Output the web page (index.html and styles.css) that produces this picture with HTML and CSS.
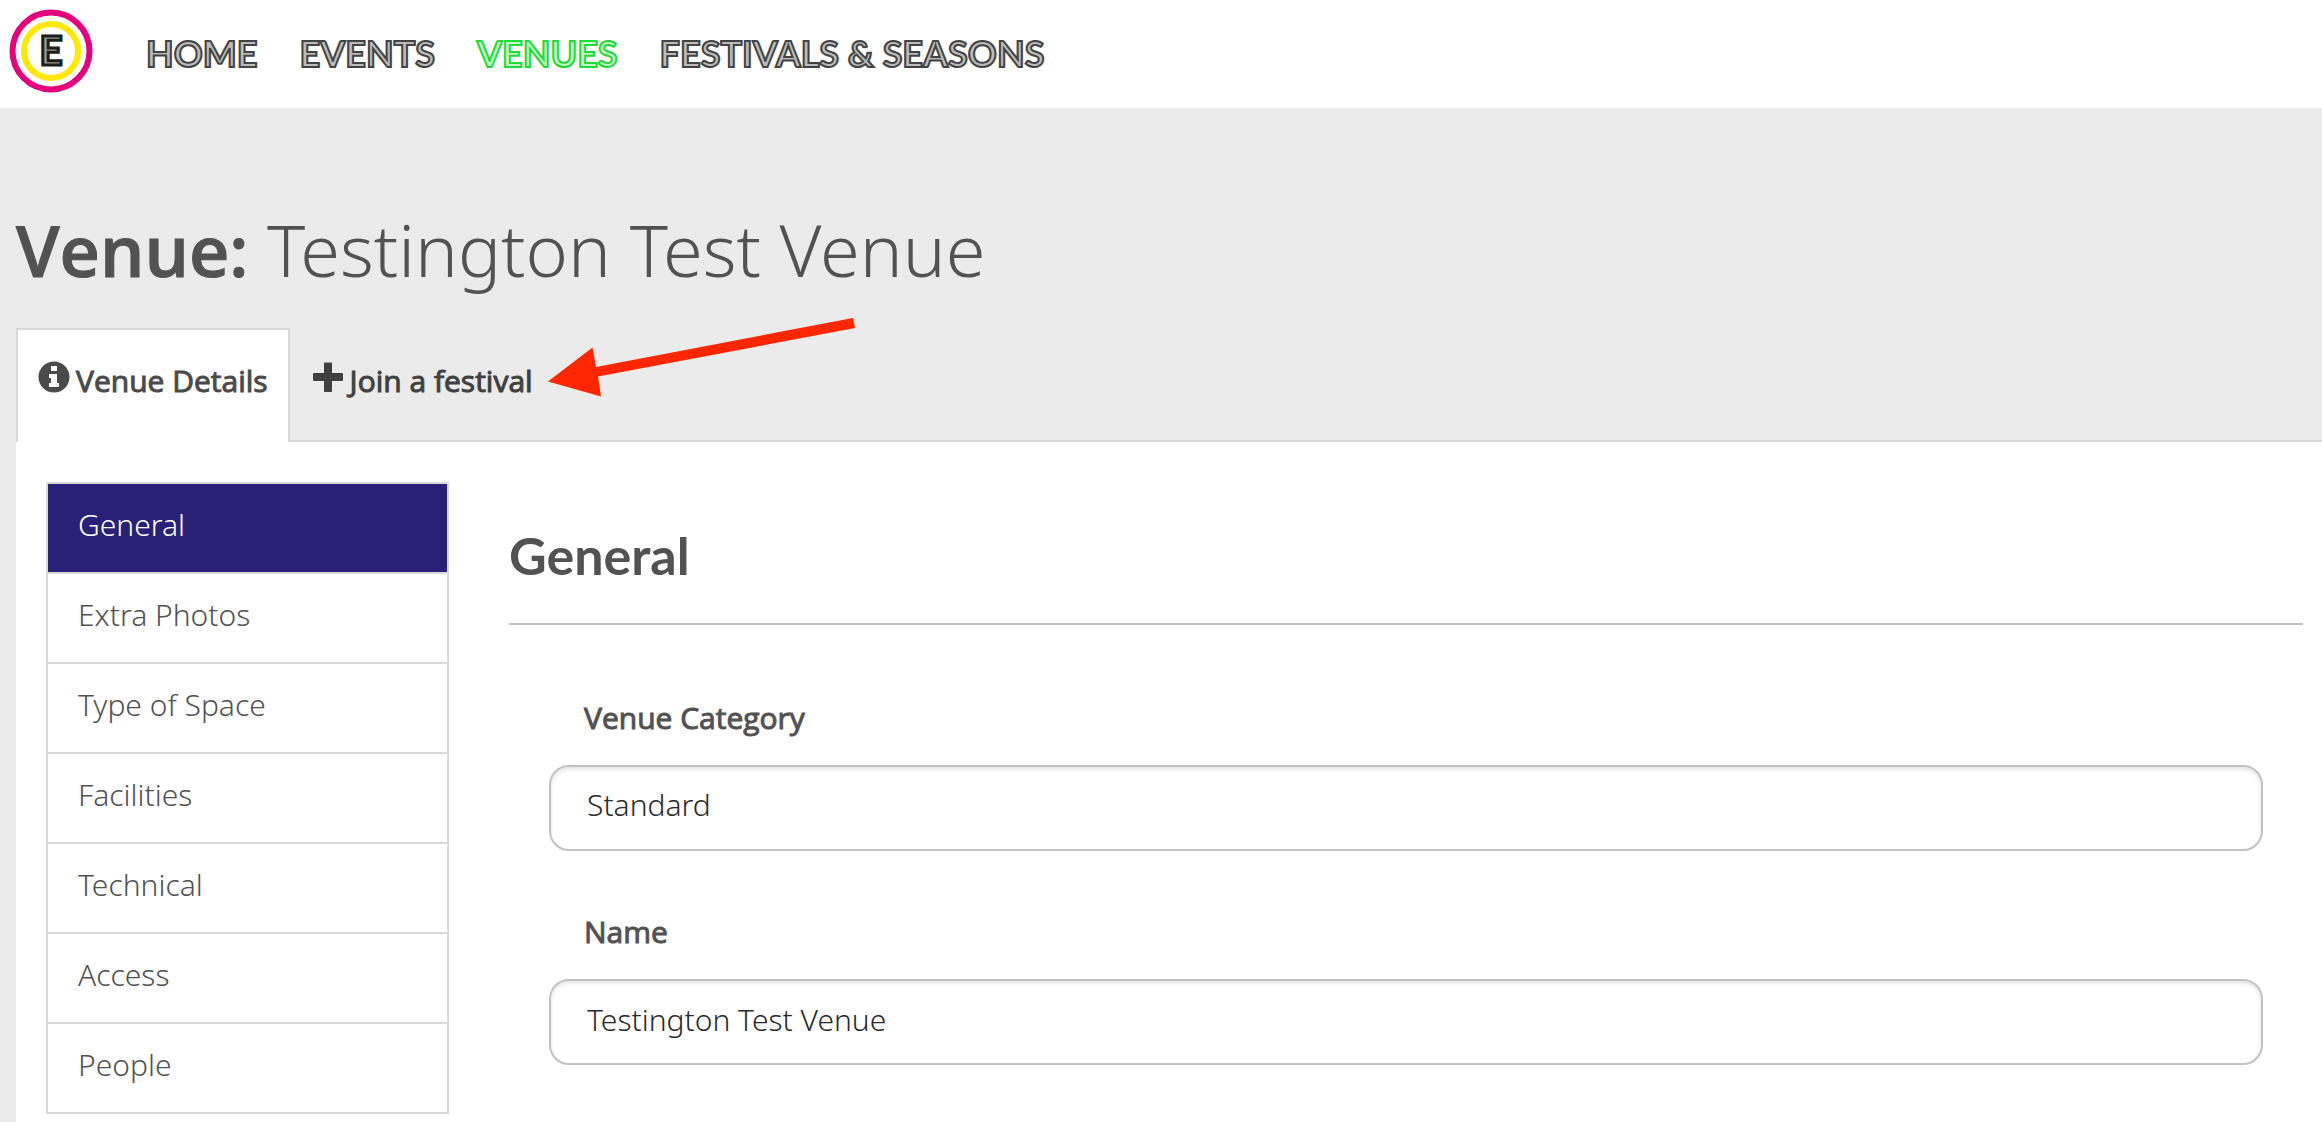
FILE: index.html
```html
<!DOCTYPE html>
<html lang="en">
<head>
  <meta charset="UTF-8" />
  <meta name="viewport" content="width=device-width, initial-scale=1.0"/>
  <title>Venue: Testington Test Venue</title>
  <link rel="stylesheet" href="styles.css">
</head>
<body>

<header class="navbar">
  <a href="#" class="logo" aria-label="E">
    <svg width="84" height="84" viewBox="0 0 84 84">
      <circle cx="42" cy="42" r="38.5" fill="none" stroke="#e5007e" stroke-width="6"/>
      <circle cx="42" cy="42" r="27" fill="none" stroke="#ffe900" stroke-width="6"/>
      <text class="logo-letter" x="42" y="56" text-anchor="middle">E</text>
    </svg>
  </a>
  <nav class="nav-links">
    <a href="#">HOME</a>
    <a href="#">EVENTS</a>
    <a href="#" class="active">VENUES</a>
    <a href="#">FESTIVALS &amp; SEASONS</a>
  </nav>
</header>

<main class="page">
  <h1><strong>Venue:</strong> Testington Test Venue</h1>

  <div class="tabs">
    <a href="#" class="tab active">
      <svg class="tab-icon" viewBox="0 0 32 32">
        <circle cx="16" cy="16" r="15.5" fill="currentColor"/>
        <path fill="#fff" d="M13 5h6v5h-6zM11 13h8v9h2v4H11v-4h2v-5h-2z"/>
      </svg>
      Venue Details
    </a>
    <a href="#" class="tab">
      <svg class="tab-icon" viewBox="0 0 32 32">
        <path fill="currentColor" d="M12 2.500q0-1 1-1h6q1 0 1 1v9.500h10q1 0 1 1v6q0 1-1 1H20v10q0 1-1 1h-6q-1 0-1-1V20H2q-1 0-1-1v-6q0-1 1-1h10z"/>
      </svg>
      Join a festival
    </a>
    <svg class="arrow" width="308" height="80" viewBox="0 0 308 80">
      <path fill="#ff2600" d="M0 63.500 44.500 29.500 48 49 305 0 307 10 50 58.500 53 78.500z"/>
    </svg>
  </div>

  <div class="panel">
    <nav class="side-menu">
      <a href="#" class="active">General</a>
      <a href="#">Extra Photos</a>
      <a href="#">Type of Space</a>
      <a href="#">Facilities</a>
      <a href="#">Technical</a>
      <a href="#">Access</a>
      <a href="#">People</a>
    </nav>

    <form class="details">
      <h2>General</h2>

      <div class="field">
        <label for="category">Venue Category</label>
        <select id="category" name="category">
          <option>Standard</option>
        </select>
      </div>

      <div class="field">
        <label for="name">Name</label>
        <input type="text" id="name" name="name" value="Testington Test Venue">
      </div>
    </form>
  </div>
</main>

</body>
</html>
```
FILE: styles.css
```css
* { box-sizing: border-box; }

body {
  margin: 0;
  min-height: 100vh;
  display: flex;
  flex-direction: column;
  font-family: "Noto Sans", "Open Sans", sans-serif;
  font-size: 30px;
  line-height: 40px;
  font-weight: 300;
  background: #ebebeb;
  color: #525252;
}

a {
  color: inherit;
  text-decoration: none;
}

.navbar {
  display: flex;
  align-items: center;
  gap: 53px;
  height: 108px;
  padding: 0 9px 6px;
  background: #fff;
}

.logo svg {
  display: block;
}

.logo-letter {
  font: 700 40px Lato, sans-serif;
  fill: #999;
  stroke: #1d1d1b;
  stroke-width: 3px;
}

/* outlined lettering with a pale core */
.nav-links {
  display: flex;
  flex-wrap: wrap;
  gap: 42px;
  padding-top: 4px;
  font-family: Lato, sans-serif;
  font-size: 36px;
  font-weight: 700;
  color: #bbb;
  -webkit-text-stroke: 2px #434343;
}

.nav-links .active {
  color: #c5f7cb;
  -webkit-text-stroke-color: #1fdb35;
}

.page {
  flex: 1;
  display: flex;
  flex-direction: column;
  padding: 101px 0 0 16px;
}

h1 {
  margin: 0 0 38px;
  font-size: 72px;
  line-height: 80px;
  font-weight: 300;
}

h1 strong {
  font-family: "Open Sans", sans-serif;
  font-size: 70px;
  font-weight: 600;
  -webkit-text-stroke: 1px;
}

.tabs {
  position: relative;
  display: flex;
  border-bottom: 2px solid #d8d8d8;
}

.tab {
  display: flex;
  gap: 6px;
  margin-bottom: -2px;
  padding: 31px 20px 41px;
  border: 2px solid transparent;
  border-bottom: none;
  font-family: "Open Sans", sans-serif;
  font-weight: 400;
  color: #404040;
  -webkit-text-stroke: 1px;
}

.tab.active {
  background: #fff;
  border-color: #d8d8d8;
  color: #4a4a4a;
}

.tab-icon {
  width: 32px;
  height: 32px;
}

.arrow {
  position: absolute;
  left: 532px;
  top: -10px;
}

.panel {
  flex: 1;
  display: flex;
  align-items: flex-start;
  gap: 60px;
  padding: 40px 19px 8px 30px;
  background: #fff;
}

.side-menu {
  flex: 0 0 403px;
  border: 2px solid #d8d8d8;
}

.side-menu a {
  display: block;
  padding: 21px 30px 27px;
}

.side-menu a + a {
  border-top: 2px solid #d8d8d8;
}

.side-menu .active {
  background: #292078;
  color: #fff;
}

.details {
  flex: 1;
  padding-top: 43px;
}

h2 {
  margin: 0 0 73px;
  padding-bottom: 38px;
  border-bottom: 2px solid #c0c0c0;
  font-family: Lato, sans-serif;
  font-size: 52px;
  line-height: 60px;
  font-weight: 700;
}

.field {
  margin: 0 40px 61px;
}

label {
  display: block;
  margin: 0 35px 27px;
  font-family: "Open Sans", sans-serif;
  font-weight: 400;
  -webkit-text-stroke: 1px;
}

.field input,
.field select {
  display: block;
  width: 100%;
  height: 86px;
  padding: 0 36px 6px;
  border: 2px solid #c2c2c2;
  border-radius: 20px;
  background: #fff;
  box-shadow: inset 0 2px 4px rgba(0, 0, 0, 0.12);
  font: inherit;
  color: #2a2a2a;
  appearance: none;
}

.field:last-child {
  margin-bottom: 0;
}
```
